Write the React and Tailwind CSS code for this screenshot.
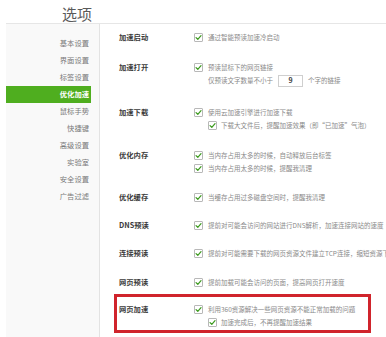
import React from "react";

const FONT = { fontFamily: '"Noto Sans CJK SC", "Noto Sans", sans-serif' };

function Check() {
  return (
    <span className="flex h-[9px] w-[9px] shrink-0 items-center justify-center rounded-[1px] border border-[#b8b8b8] bg-white">
      <svg width="7" height="7" viewBox="0 0 10 10">
        <path d="M1.5 5.2 L4 7.6 L8.6 2.4" fill="none" stroke="#3d9b1f" strokeWidth="1.8" strokeLinecap="round" strokeLinejoin="round" />
      </svg>
    </span>
  );
}

function Line({ text, indent, children, noCheck }) {
  return (
    <div className={`flex h-[13px] items-center whitespace-nowrap ${indent ? "pl-[14px]" : ""}`}>
      {!noCheck && <Check />}
      <span className={`${noCheck ? "ml-[14px]" : indent ? "ml-[4px]" : "ml-[5px]"} flex items-center text-[6.5px] leading-[13px] text-[#8a8a8a]`}>
        {text}
        {children}
      </span>
    </div>
  );
}

function Section({ label, mt, children }) {
  return (
    <div className={`flex pl-[19px] ${mt}`}>
      <div className="flex h-[13px] w-[75px] shrink-0 items-center text-[7.3px] font-bold text-[#3a3a3a]">{label}</div>
      <div className="flex flex-col">{children}</div>
    </div>
  );
}

const nav = ["基本设置", "界面设置", "标签设置", "优化加速", "鼠标手势", "快捷键", "高级设置", "实验室", "安全设置", "广告过滤"];

export default function App() {
  return (
    <div className="h-[337px] w-[386px] overflow-hidden bg-white" style={FONT}>
      <div className="ml-[6px] h-[24px] border-b border-[#e6e6e6] pl-[56px] pt-[3px] text-[15px] leading-[21px] text-[#5a5a5a]">
        选项
      </div>
      <div className="flex h-[313px]">
        <div className="ml-[6px] w-[94px] shrink-0 border-r border-[#e3e3e3] bg-[#f9f9f9] pt-[11px]">
          {nav.map((n) =>
            n === "优化加速" ? (
              <div key={n} className="flex h-[17px] w-[85px] items-center justify-end bg-[#4fae1f] pr-[2px] text-[7.3px] font-bold text-white">
                {n}
              </div>
            ) : (
              <div key={n} className="flex h-[17px] w-[85px] items-center justify-end pr-[2px] text-[7.3px] text-[#7a7a7a]">
                {n}
              </div>
            )
          )}
        </div>
        <div className="flex min-w-0 flex-1 flex-col overflow-hidden">
          <Section label="加速启动" mt="mt-[7px]">
            <Line text="通过智能预读加速冷启动" />
          </Section>
          <Section label="加速打开" mt="mt-[17px]">
            <Line text="预读鼠标下的网页链接" />
            <Line noCheck text="仅预读文字数量不小于">
              <span className="mx-[5px] flex h-[12px] w-[25px] items-center justify-center border border-[#cfcfcf] text-[7px] font-bold text-[#444]">9</span>
              个字的链接
            </Line>
          </Section>
          <Section label="加速下载" mt="mt-[19px]">
            <Line text="使用云加速引擎进行加速下载" />
            <Line indent text="下载大文件后，提醒加速效果（即“已加速”气泡）" />
          </Section>
          <Section label="优化内存" mt="mt-[17px]">
            <Line text="当内存占用太多的时候，自动释放后台标签" />
            <Line text="当内存占用太多的时候，提醒我清理" />
          </Section>
          <Section label="优化缓存" mt="mt-[16px]">
            <Line text="当缓存占用过多磁盘空间时，提醒我清理" />
          </Section>
          <Section label="DNS预读" mt="mt-[15px]">
            <Line text="提前对可能会访问的网站进行DNS解析，加速连接网站的速度" />
          </Section>
          <Section label="连接预读" mt="mt-[15px]">
            <Line text="提前对可能需要下载的网页资源文件建立TCP连接，缩短资源下载时间" />
          </Section>
          <Section label="网页预读" mt="mt-[16px]">
            <Line text="提前加载可能会访问的页面，提高网页打开速度" />
          </Section>
          <div className="ml-[14px] mt-[5px] h-[39px] w-[257px] shrink-0 border-[3px] border-[#d0242c] pl-[2px] pt-[6px]">
            <div className="flex">
              <div className="flex h-[13px] w-[75px] shrink-0 items-center text-[7.3px] font-bold text-[#3a3a3a]">网页加速</div>
              <div className="flex flex-col">
                <Line text="利用360资源解决一些网页资源不能正常加载的问题" />
                <Line indent text="加速完成后，不再提醒加速结果" />
              </div>
            </div>
          </div>
        </div>
      </div>
    </div>
  );
}
